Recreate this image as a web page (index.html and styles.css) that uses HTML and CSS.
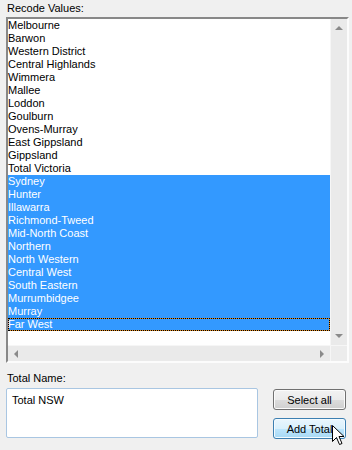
FILE: index.html
```html
<!DOCTYPE html>
<html lang="en">

<head>
   <meta charset="UTF-8">
   <meta name="viewport" content="width=device-width, initial-scale=1.0">
   <link rel="stylesheet" href="styles.css">
</head>

<body>
   <div class="dialog">
      <label class="caption" for="recode">Recode Values:</label>
      <div class="listbox" id="recode">
         <ul class="items">
            <li>Melbourne</li>
            <li>Barwon</li>
            <li>Western District</li>
            <li>Central Highlands</li>
            <li>Wimmera</li>
            <li>Mallee</li>
            <li>Loddon</li>
            <li>Goulburn</li>
            <li>Ovens-Murray</li>
            <li>East Gippsland</li>
            <li>Gippsland</li>
            <li>Total Victoria</li>
            <li class="selected">Sydney</li>
            <li class="selected">Hunter</li>
            <li class="selected">Illawarra</li>
            <li class="selected">Richmond-Tweed</li>
            <li class="selected">Mid-North Coast</li>
            <li class="selected">Northern</li>
            <li class="selected">North Western</li>
            <li class="selected">Central West</li>
            <li class="selected">South Eastern</li>
            <li class="selected">Murrumbidgee</li>
            <li class="selected">Murray</li>
            <li class="selected focused">Far West</li>
         </ul>
         <div class="vscroll">
            <span class="arrow up"></span>
            <span class="arrow down"></span>
         </div>
         <div class="hscroll">
            <span class="arrow left"></span>
            <span class="arrow right"></span>
         </div>
         <div class="corner"></div>
      </div>

      <label class="caption name-caption" for="total-name">Total Name:</label>
      <div class="bottom">
         <div class="textbox" id="total-name">Total NSW</div>
         <div class="buttons">
            <button class="btn">Select all</button>
            <button class="btn hover">Add Total</button>
         </div>
      </div>

      <svg class="cursor" width="13" height="21" viewBox="0 0 13 21">
         <path d="M0.5 0.5 L0.5 16.5 L4.5 12.5 L7.5 19.5 L10 18.5 L7 11.5 L12 11.5 Z"
            fill="#fff" stroke="#000" stroke-width="1" stroke-linejoin="miter" />
      </svg>
   </div>
</body>

</html>
```

FILE: styles.css
```css
body {
   margin: 0;
   background-color: #f0f0f0;
   font-family: "Liberation Sans", Arial, sans-serif;
   font-size: 11px;
   color: #000;
}

.dialog {
   position: relative;
   width: 352px;
   height: 450px;
   padding: 2px 0 0 6px;
   box-sizing: border-box;
}

.caption {
   display: block;
   line-height: 13px;
   padding-left: 1px;
}

.listbox {
   display: grid;
   grid-template-columns: 322px 17px;
   grid-template-rows: 326px 16px;
   width: 343px;
   margin-top: 2px;
   border-style: solid;
   border-width: 2px;
   border-color: #888 #fcfcfc #fcfcfc #888;
   box-shadow: inset 1px 1px 0 #5e5e5e;
   background-color: #fff;
   box-sizing: border-box;
}

.items {
   list-style: none;
   margin: 0;
   padding: 0;
   background-color: #fff;
}

.items li {
   position: relative;
   height: 13px;
   line-height: 13px;
   padding-left: 0;
   white-space: nowrap;
}

.items .selected {
   background-color: #3399ff;
   color: #fff;
}

.items .focused::after {
   content: "";
   position: absolute;
   left: 0;
   top: 0;
   right: 0;
   bottom: 0;
   border: 1px dotted #000;
   box-shadow: inset 0 0 0 0 transparent, 0 0 0 0 transparent;
}

.items .focused {
   box-shadow: inset 0 0 0 1px #e08a1e;
}

.vscroll {
   display: flex;
   flex-direction: column;
   justify-content: space-between;
   align-items: center;
   padding: 7px 0;
   background-color: #eaeaea;
   border-left: 1px solid #f6f6f6;
   box-sizing: border-box;
}

.hscroll {
   display: flex;
   justify-content: space-between;
   align-items: center;
   padding: 0 6px;
   background-color: #eaeaea;
   border-top: 1px solid #f6f6f6;
   box-sizing: border-box;
}

.corner {
   background-color: #ececec;
   border-top: 1px solid #f6f6f6;
   border-left: 1px solid #f6f6f6;
}

.arrow {
   width: 0;
   height: 0;
   border-style: solid;
   border-color: transparent;
}

.arrow.up {
   border-width: 0 4px 4px 4px;
   border-bottom-color: #8a8a8a;
}

.arrow.down {
   border-width: 4px 4px 0 4px;
   border-top-color: #8a8a8a;
}

.arrow.left {
   border-width: 4px 4px 4px 0;
   border-right-color: #8a8a8a;
}

.arrow.right {
   border-width: 4px 0 4px 4px;
   border-left-color: #8a8a8a;
}

.name-caption {
   margin-top: 9px;
}

.bottom {
   display: flex;
   justify-content: space-between;
   width: 340px;
   margin-top: 3px;
}

.textbox {
   width: 252px;
   height: 50px;
   padding: 5px 5px;
   border: 1px solid #a9c6e2;
   border-radius: 2px;
   background-color: #fff;
   box-sizing: border-box;
   line-height: 13px;
}

.buttons {
   display: flex;
   flex-direction: column;
   gap: 8px;
   padding-top: 1px;
}

.btn {
   width: 73px;
   height: 21px;
   padding: 0;
   font-family: inherit;
   font-size: 11px;
   color: #000;
   border: 1px solid #707070;
   border-radius: 3px;
   background: linear-gradient(#f2f2f2 0%, #ebebeb 50%, #dddddd 51%, #cfcfcf 100%);
   box-shadow: inset 0 0 0 1px #fbfbfb;
}

.btn.hover {
   border-color: #3c7fb1;
   background: linear-gradient(#eaf6fd 0%, #d9f0fc 50%, #bee6fd 51%, #a7d9f5 100%);
   box-shadow: inset 0 0 0 1px #f4fbff;
}

.cursor {
   position: absolute;
   left: 332px;
   top: 425px;
}
```
